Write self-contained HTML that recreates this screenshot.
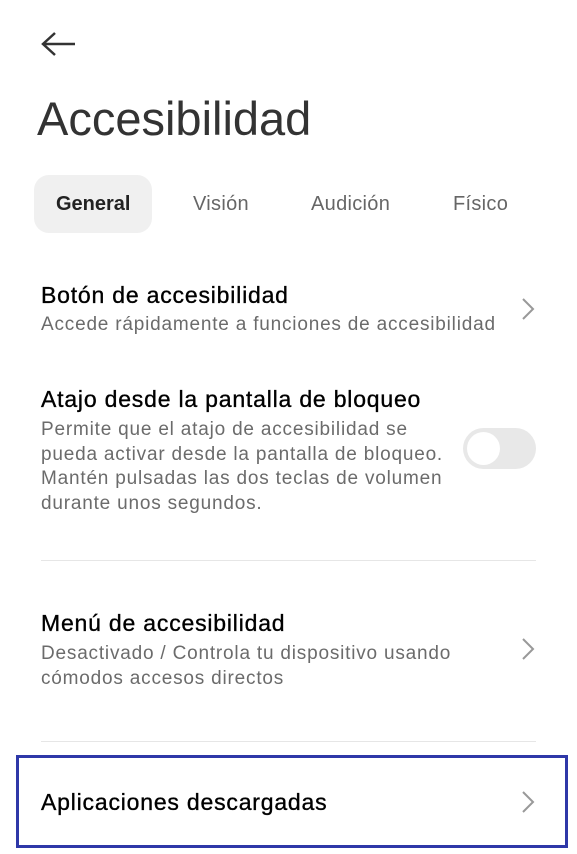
<!DOCTYPE html>
<html><head><meta charset="utf-8"><style>
body{margin:0;width:577px;height:854px;background:#fff;position:relative;overflow:hidden;font-family:"Liberation Sans",sans-serif}
.a{position:absolute;white-space:nowrap}
.t{font-size:23px;color:#000;letter-spacing:0.8px;-webkit-text-stroke:0.35px #000}
.s{font-size:19px;color:#6b6b6b;line-height:24.5px;letter-spacing:0.8px}
.tab{font-size:20px;color:#666;letter-spacing:0.3px}
.hr{position:absolute;left:41px;width:495px;height:1px;background:#e6e6e6}
</style></head><body>
<svg class="a" style="left:40px;top:30px" width="38" height="28" viewBox="0 0 38 28"><path d="M3 14H35M15 3L3 14L15 25" stroke="#333" stroke-width="2.5" fill="none"/></svg>
<div class="a" style="left:37px;top:91px;font-size:47px;color:#333;font-weight:300;letter-spacing:0">Accesibilidad</div>
<div class="a" style="left:34px;top:175px;width:118px;height:58px;background:#f0f0f0;border-radius:15px"></div>
<div class="a tab" style="left:56px;top:193px;color:#222;font-weight:bold;letter-spacing:0">General</div>
<div class="a tab" style="left:193px;top:193px">Visión</div>
<div class="a tab" style="left:311px;top:193px">Audición</div>
<div class="a tab" style="left:453px;top:193px">Físico</div>

<div class="a t" style="left:41px;top:282px">Botón de accesibilidad</div>
<div class="a s" style="left:41px;top:313px">Accede rápidamente a funciones de accesibilidad</div>
<svg class="a" style="left:520px;top:297px" width="16" height="24"><path d="M3 2L13 12L3 22" stroke="#999" stroke-width="2" fill="none"/></svg>

<div class="a t" style="left:41px;top:386px">Atajo desde la pantalla de bloqueo</div>
<div class="a s" style="left:41px;top:418px">Permite que el atajo de accesibilidad se<br>pueda activar desde la pantalla de bloqueo.<br>Mantén pulsadas las dos teclas de volumen<br>durante unos segundos.</div>
<div class="a" style="left:463px;top:428px;width:73px;height:41px;border-radius:21px;background:#e8e8e8"></div>
<div class="a" style="left:467px;top:432px;width:33px;height:33px;border-radius:50%;background:#fff"></div>

<div class="hr" style="top:560px"></div>

<div class="a t" style="left:41px;top:610px">Menú de accesibilidad</div>
<div class="a s" style="left:41px;top:642px">Desactivado / Controla tu dispositivo usando<br>cómodos accesos directos</div>
<svg class="a" style="left:520px;top:637px" width="16" height="24"><path d="M3 2L13 12L3 22" stroke="#999" stroke-width="2" fill="none"/></svg>

<div class="hr" style="top:741px"></div>

<div class="a" style="left:16px;top:755px;width:546px;height:87px;border:3px solid #2e38a8"></div>
<div class="a t" style="left:41px;top:789px">Aplicaciones descargadas</div>
<svg class="a" style="left:520px;top:790px" width="16" height="24"><path d="M3 2L13 12L3 22" stroke="#999" stroke-width="2" fill="none"/></svg>
</body></html>
